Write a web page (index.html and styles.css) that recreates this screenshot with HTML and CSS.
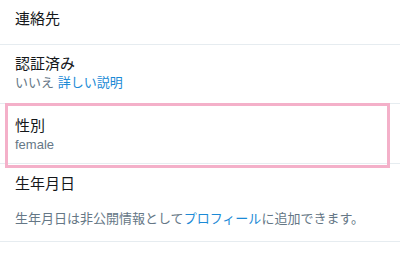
FILE: index.html
```html
<!DOCTYPE html>
<html lang="ja">
<head>
    <meta charset="UTF-8">
    <title>プロフィール情報</title>
    <link rel="stylesheet" href="styles.css">
</head>
<body>
    <div class="settings-list">
        <!-- 連絡先 -->
        <div class="row row-single">
            <div class="row-title">連絡先</div>
        </div>

        <!-- 認証済み -->
        <div class="row">
            <div class="row-title">認証済み</div>
            <div class="row-sub">いいえ <a href="#" class="link">詳しい説明</a></div>
        </div>

        <!-- 性別 (highlighted) -->
        <div class="row row-gender">
            <div class="row-title">性別</div>
            <div class="row-sub">female</div>
            <div class="highlight"></div>
        </div>

        <!-- 生年月日 -->
        <div class="row row-birthday">
            <div class="row-title">生年月日</div>
            <div class="row-note">生年月日は非公開情報として<a href="#" class="link">プロフィール</a>に追加できます。</div>
        </div>
    </div>
</body>
</html>
```

FILE: styles.css
```css
body {
    margin: 0;
    background: #fff;
    font-family: "Liberation Sans", "Noto Sans CJK JP", sans-serif;
    color: #14171a;
}
.settings-list {
    width: 400px;
}
.row {
    position: relative;
    padding: 9px 15px 11px;
    border-bottom: 1px solid #e6ecf0;
}
.row-single {
    padding: 9px 15px;
    height: 26px;
}
.row-title {
    font-size: 15px;
    line-height: 20px;
}
.row-sub {
    font-size: 13px;
    line-height: 18px;
    color: #657786;
}
.row-gender {
    padding: 12px 15px 9px;
}
.row-birthday {
    padding: 10px 15px 12px;
}
.row-note {
    margin-top: 15px;
    font-size: 13px;
    line-height: 20px;
    color: #657786;
}
.link {
    color: #1b8ad6;
    text-decoration: none;
}
.highlight {
    position: absolute;
    top: -1px;
    left: 5px;
    right: 10px;
    bottom: -5px;
    border: 3px solid #f4b0c9;
}
```
